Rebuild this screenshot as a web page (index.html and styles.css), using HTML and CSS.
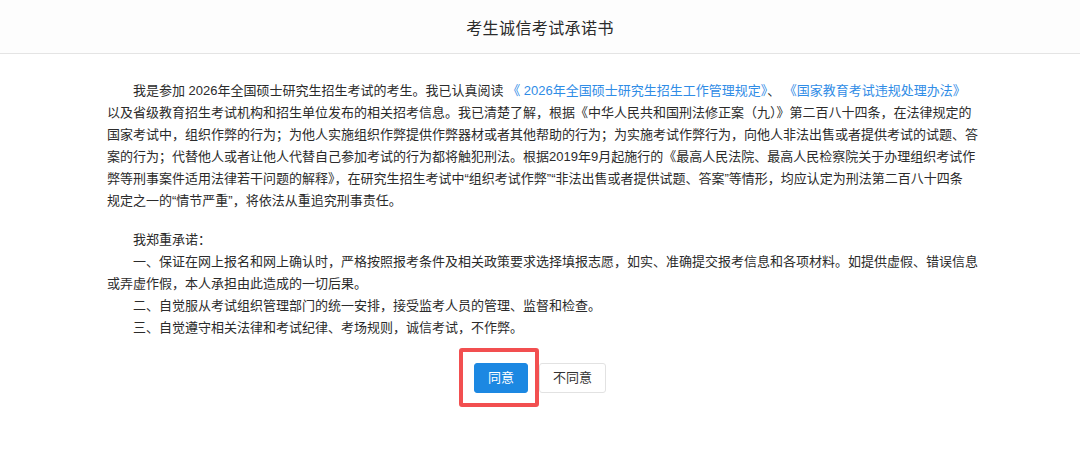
FILE: index.html
```html
<!DOCTYPE html>
<html lang="zh-CN">
<head>
<meta charset="utf-8">
<title>考生诚信考试承诺书</title>
<link rel="stylesheet" href="styles.css">
</head>
<body>
<header class="header">
  <h1 class="title">考生诚信考试承诺书</h1>
</header>
<main class="content">
  <p class="para">我是参加 2026年全国硕士研究生招生考试的考生。我已认真阅读 <a class="link">《 2026年全国硕士研究生招生工作管理规定》</a>、 <a class="link">《国家教育考试违规处理办法》</a><br>以及省级教育招生考试机构和招生单位发布的相关招考信息。我已清楚了解，根据《中华人民共和国刑法修正案（九）》第二百八十四条，在法律规定的<br>国家考试中，组织作弊的行为；为他人实施组织作弊提供作弊器材或者其他帮助的行为；为实施考试作弊行为，向他人非法出售或者提供考试的试题、答<br>案的行为；代替他人或者让他人代替自己参加考试的行为都将触犯刑法。根据2019年9月起施行的《最高人民法院、最高人民检察院关于办理组织考试作<br>弊等刑事案件适用法律若干问题的解释》，在研究生招生考试中“组织考试作弊”“非法出售或者提供试题、答案”等情形，均应认定为刑法第二百八十四条<br>规定之一的“情节严重”，将依法从重追究刑事责任。</p>
  <div class="promise">
    <p class="para">我郑重承诺：</p>
    <p class="para">一、保证在网上报名和网上确认时，严格按照报考条件及相关政策要求选择填报志愿，如实、准确提交报考信息和各项材料。如提供虚假、错误信息<br>或弄虚作假，本人承担由此造成的一切后果。</p>
    <p class="para">二、自觉服从考试组织管理部门的统一安排，接受监考人员的管理、监督和检查。</p>
    <p class="para">三、自觉遵守相关法律和考试纪律、考场规则，诚信考试，不作弊。</p>
  </div>
  <div class="actions">
    <span class="agree-wrap">
      <button class="btn btn-primary" type="button">同意</button>
      <span class="highlight"></span>
    </span>
    <button class="btn btn-default" type="button">不同意</button>
  </div>
</main>
</body>
</html>
```

FILE: styles.css
```css
html, body {
  margin: 0;
  padding: 0;
  background: #ffffff;
}

body {
  min-height: 100vh;
  font-family: "Liberation Sans", "Noto Sans CJK SC", sans-serif;
  color: #2b2b2b;
}

.header {
  height: 53px;
  border-bottom: 1px solid #e4e4e4;
  background: #fdfdfd;
  display: flex;
  align-items: center;
  justify-content: center;
}

.title {
  margin: 0;
  font-size: 16px;
  font-weight: normal;
  color: #2b2b2b;
  letter-spacing: 0.4px;
}

.content {
  width: 866px;
  margin: 0 auto;
  padding-top: 26px;
  padding-bottom: 40px;
  font-size: 13px;
  line-height: 22px;
}

.para {
  margin: 0;
  text-indent: 2em;
  white-space: nowrap;
}

.link {
  color: #2f8ce6;
  text-decoration: none;
}

.promise {
  margin-top: 17px;
}

.actions {
  margin-top: 24px;
  display: flex;
  justify-content: center;
  align-items: flex-start;
  gap: 11px;
}

.agree-wrap {
  position: relative;
  display: block;
  height: 30px;
}

.btn {
  display: block;
  height: 30px;
  font-family: inherit;
  font-size: 13px;
  line-height: 28px;
  border-radius: 3px;
  padding: 0;
  cursor: pointer;
}

.btn-primary {
  width: 54px;
  background: #1c88e2;
  border: 1px solid #1c88e2;
  color: #ffffff;
}

.btn-default {
  width: 67px;
  background: #ffffff;
  border: 1px solid #e2e2e2;
  color: #333333;
}

.highlight {
  position: absolute;
  left: -15px;
  top: -15px;
  width: 80px;
  height: 59px;
  box-sizing: border-box;
  border: 4px solid #f24f50;
  border-radius: 3px;
  pointer-events: none;
}
```
